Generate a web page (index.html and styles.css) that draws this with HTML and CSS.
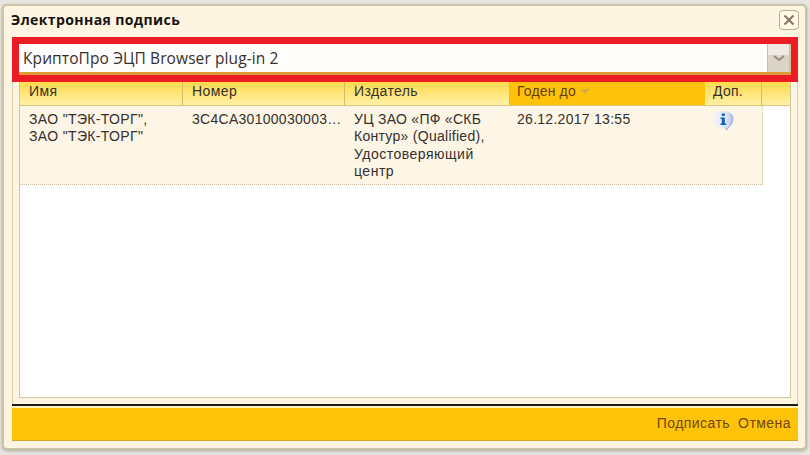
FILE: index.html
```html
<!DOCTYPE html>
<html lang="ru">
<head>
<meta charset="utf-8">
<title>Электронная подпись</title>
<link rel="stylesheet" href="styles.css">
</head>
<body>
<section class="window">
  <header class="titlebar">
    <h1 class="title">Электронная подпись</h1>
    <button class="close" aria-label="Закрыть"><svg width="12" height="12" viewBox="0 0 12 12"><path d="M1.500 1.500 10.500 10.500M10.500 1.500 1.500 10.500"/></svg></button>
  </header>
  <main class="panel">
    <div class="combo">
      <div class="combo-field">
        <span class="combo-value">КриптоПро ЭЦП Browser plug-in 2</span>
        <span class="combo-arrow"><svg width="12" height="7" viewBox="0 0 12 7"><path d="M1 1 6 5 11 1"/></svg></span>
      </div>
    </div>
    <div class="grid">
      <div class="row head">
        <div class="cell">Имя</div>
        <div class="cell">Номер</div>
        <div class="cell">Издатель</div>
        <div class="cell sorted"><span>Годен до</span><svg width="10" height="5" viewBox="0 0 10 5"><path d="M0 0H10L5 5Z"/></svg></div>
        <div class="cell extra">Доп.</div>
        <div class="cell"></div>
      </div>
      <div class="row record">
        <div class="cell name">ЗАО "ТЭК-ТОРГ",<br>ЗАО "ТЭК-ТОРГ"</div>
        <div class="cell number">3C4CA30100030003…</div>
        <div class="cell issuer">УЦ ЗАО «ПФ «СКБ<br>Контур» (Qualified),<br><span class="wide">Удостоверяющий<br>центр</span></div>
        <div class="cell date">26.12.2017 13:55</div>
        <div class="cell info"><svg width="23" height="22" viewBox="0 0 23 22">
          <defs><linearGradient id="bubble" x1="0" y1="0" x2="1" y2="0"><stop offset="0" stop-color="#f3f2fa"/><stop offset=".6" stop-color="#e3e8f7"/><stop offset="1" stop-color="#b4bfe2"/></linearGradient></defs>
          <path d="M11 1C17 1 21.500 4 21.500 9.500C21.500 14 17.500 17 14.500 20.500L12.500 17.500C5.500 18 1.500 14.500 1.500 9.500C1.500 4 5.500 1 11 1Z" fill="url(#bubble)"/>
          <path d="M18.500 3.500Q21 6 20.500 10Q19.500 14 14.500 20L13 17.500" fill="none" stroke="#a5b0d5"/>
          <path d="M9.800 3.500h3v2.500h-3zM8.500 7.500h4.300v6h1.400v1.500H8.500v-1.500h1.300V9H8.500z" fill="#1263b0"/>
        </svg></div>
      </div>
    </div>
  </main>
  <footer class="footer">
    <span class="action sign">Подписать</span>
    <span class="action cancel">Отмена</span>
  </footer>
</section>
</body>
</html>
```
FILE: styles.css
```css
* { box-sizing: border-box; }
body {
  margin: 0;
  height: 455px;
  padding: 4px 3px 5px 2px;
  background: #e8e5e0;
  overflow: hidden;
  font-family: "Liberation Sans", sans-serif;
  font-size: 14px;
  color: #35302b;
}
.window {
  height: 446px;
  padding: 0 7px 7px 8px;
  border: 2px solid #c9c4a6;
  border-radius: 5px;
  background: #fdf5e2;
  box-shadow: 0 1px 3px #aaa59b;
}
.titlebar {
  display: flex;
  align-items: flex-start;
  justify-content: space-between;
  height: 31px;
}
.title {
  margin: 4px 0 0 -1px;
  font: bold 14px/20px "Open Sans", sans-serif;
  letter-spacing: 0.4px;
  color: #15120f;
}
.close {
  display: flex;
  align-items: center;
  justify-content: center;
  width: 20px;
  height: 20px;
  margin: 4px -1px 0 0;
  padding: 0;
  border: 1px solid #bba98a;
  border-radius: 4px;
  background: #fffbea;
}
.close path { fill: none; stroke: #867359; stroke-width: 2; }
.panel {
  height: 367px;
  padding: 0 6px;
  border: solid #ddd2ab;
  border-width: 0 1px;
}
.combo {
  height: 45px;
  margin: 0 -7px;
  padding: 7px;
  background: #ec1c24;
}
.combo-field {
  display: flex;
  height: 31px;
  border-bottom: 3px solid #df9b35;
  background: #fffefc;
}
.combo-value {
  flex: 1;
  padding-left: 4px;
  font: 15.5px/29px "Open Sans", sans-serif;
  letter-spacing: 0.1px;
  white-space: nowrap;
}
.combo-arrow {
  display: flex;
  align-items: center;
  justify-content: center;
  width: 24px;
  border: solid #d4c391;
  border-width: 0 2px 0 1px;
  background: linear-gradient(#eeeae3 0 40%, #dbd4c8 40%);
}
.combo-arrow path { fill: none; stroke: #9b8c78; stroke-width: 2; }
.grid {
  height: 316px;
  border: solid #cfc6a4;
  border-width: 0 1px 1px;
  background: #fff;
}
.row {
  display: grid;
  grid-template-columns: 163px 162px 165px 195px 57px 1fr;
  letter-spacing: 0.28px;
}
.head {
  height: 24px;
  border-bottom: 1px solid #d8c77e;
  background: linear-gradient(#ffda4c, #fff0a6);
  letter-spacing: 0.4px;
}
.head .cell {
  padding-left: 9px;
  border-right: 1px solid #d8bd61;
  line-height: 18px;
}
.head .cell:last-child { border-right: 0; }
.head .sorted {
  display: flex;
  gap: 4px;
  padding-left: 7px;
  background: #ffc20a;
  border-right: 0;
  color: #673f05;
  letter-spacing: 0.15px;
}
.head .extra { padding-left: 8px; letter-spacing: 0.25px; }
.sorted svg { margin-top: 7px; fill: #d8ae45; }
.record {
  width: 743px;
  grid-template-columns: 163px 162px 165px 195px 1fr;
  height: 79px;
  border: dotted #c9bd9b;
  border-width: 0 1px 1px 0;
  background: #fdf5e6;
}
.record .cell {
  padding: 5px 0 0 9px;
  line-height: 17.3px;
  white-space: nowrap;
}
.record .name { letter-spacing: 0.35px; }
.record .wide { letter-spacing: 0.5px; }
.record .date { padding-left: 7px; }
.record .info { padding: 4px 0 0 7px; }
.footer {
  display: flex;
  justify-content: flex-end;
  gap: 8px;
  height: 37px;
  padding: 4px 7px 0 0;
  border-top: 2px solid #1f1d18;
  border-bottom: 1px solid #d5a52c;
  background: linear-gradient(#fff3bd 0 2px, #ffc40a 2px);
  color: #71470a;
  line-height: 26px;
  letter-spacing: 0.45px;
}
```
